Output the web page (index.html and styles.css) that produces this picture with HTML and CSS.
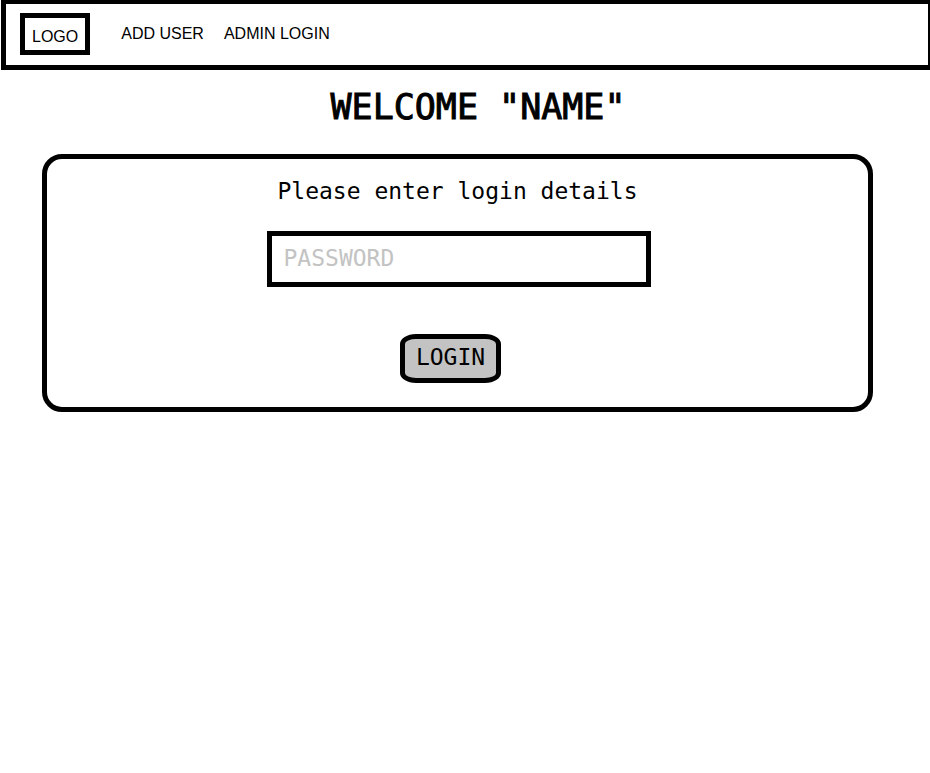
FILE: index.html
```html
<!DOCTYPE html>
<html lang="en">
<head>
<meta charset="utf-8">
<title>Login</title>
<link rel="stylesheet" href="styles.css">
</head>
<body>
<header class="topbar">
  <a class="logo" href="#">LOGO</a>
  <nav class="nav">
    <a href="#">ADD USER</a>
    <a href="#">ADMIN LOGIN</a>
  </nav>
</header>
<main class="page">
  <h1 class="title">WELCOME "NAME"</h1>
  <form class="card">
    <label class="prompt" for="password">Please enter login details</label>
    <input class="field" id="password" type="password" placeholder="PASSWORD">
    <button class="login" type="button">LOGIN</button>
  </form>
</main>
</body>
</html>
```
FILE: styles.css
```css
* {
  box-sizing: border-box;
}

body {
  margin: 0;
  background: #fff;
  color: #000;
  font: 16px/20px "Liberation Sans", Arial, sans-serif;
}

a {
  color: inherit;
  text-decoration: none;
}

.topbar {
  display: flex;
  align-items: flex-start;
  gap: 31px;
  margin-left: 1px;
  padding: 9px 14px 10px;
  border: solid #000;
  border-width: 4px 2px 5px 5px;
}

.logo {
  padding: 9px 7px 3px;
  border: 5px solid #000;
}

.nav {
  display: flex;
  gap: 20px;
  padding-top: 11px;
}

.title,
.card {
  font-family: "Lucida Console", "DejaVu Sans Mono", monospace;
}

.title {
  margin: 0;
  padding-left: 26px;
  font-size: 35px;
  line-height: 40px;
  font-weight: 400;
  text-align: center;
  -webkit-text-stroke: 1px #000;
}

.page {
  padding-top: 17px;
}

.card {
  display: flex;
  flex-direction: column;
  align-items: center;
  margin: 27px 57px 0 42px;
  padding: 18px 20px 24px;
  border: 5px solid #000;
  border-radius: 20px;
  font-size: 23px;
  line-height: 28px;
}

.field {
  width: 100%;
  max-width: 384px;
  height: 56px;
  margin: 26px 0 47px 2px;
  padding: 0 12px 3px;
  border: 5px solid #000;
  border-radius: 0;
  background: #fff;
  font: inherit;
}

.field::placeholder {
  color: #c3c3c3;
  opacity: 1;
}

.login {
  margin-right: 14px;
  padding: 4px 11px 7px;
  border: 5px solid #000;
  border-radius: 16px / 10px;
  background: #c3c3c3;
  color: #000;
  font: inherit;
}
```
